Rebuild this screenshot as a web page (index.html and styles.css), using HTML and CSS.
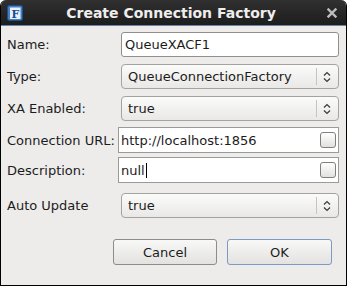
FILE: index.html
```html
<!DOCTYPE html>
<html lang="en">
<head>
  <meta charset="UTF-8">
  <title>Create Connection Factory</title>
  <link rel="stylesheet" href="styles.css">
</head>
<body>
  <div class="window">
    <div class="titlebar">
      <svg class="app-icon" width="16" height="16" viewBox="0 0 16 16">
        <rect x="0.5" y="0.5" width="15" height="15" rx="2" fill="#3f7fc6" stroke="#1d4f8f"/>
        <rect x="3" y="2.5" width="10.5" height="11.5" fill="#e9f1fa"/>
        <text x="8.3" y="12.6" text-anchor="middle" class="icon-letter">F</text>
      </svg>
      <div class="title">Create Connection Factory</div>
      <svg class="close" width="10" height="10" viewBox="0 0 10 10">
        <path d="M1.5 1.5 L8.5 8.5 M8.5 1.5 L1.5 8.5" stroke="#bdbdbd" stroke-width="2.4" stroke-linecap="square"/>
      </svg>
    </div>

    <div class="content">
      <div class="row row-name">
        <span class="label">Name:</span>
        <div class="entry">QueueXACF1</div>
      </div>
      <div class="row row-combo">
        <span class="label">Type:</span>
        <div class="combo"><span class="combo-text">QueueConnectionFactory</span><span class="combo-sep"></span><svg class="arrows" width="8" height="12" viewBox="0 0 8 12"><path d="M1 4.5 L4 1.5 L7 4.5 M1 7.5 L4 10.5 L7 7.5" fill="none" stroke="#3a3a3a" stroke-width="1.2"/></svg></div>
      </div>
      <div class="row row-combo">
        <span class="label">XA Enabled:</span>
        <div class="combo"><span class="combo-text">true</span><span class="combo-sep"></span><svg class="arrows" width="8" height="12" viewBox="0 0 8 12"><path d="M1 4.5 L4 1.5 L7 4.5 M1 7.5 L4 10.5 L7 7.5" fill="none" stroke="#3a3a3a" stroke-width="1.2"/></svg></div>
      </div>
      <div class="row row-url">
        <span class="label">Connection URL:</span>
        <div class="entry entry-check"><span class="entry-text">http://localhost:1856</span><span class="check"></span></div>
      </div>
      <div class="row row-desc">
        <span class="label">Description:</span>
        <div class="entry entry-check"><span class="entry-text">null<span class="caret"></span></span><span class="check"></span></div>
      </div>
      <div class="row row-auto">
        <span class="label">Auto Update</span>
        <div class="combo"><span class="combo-text">true</span><span class="combo-sep"></span><svg class="arrows" width="8" height="12" viewBox="0 0 8 12"><path d="M1 4.5 L4 1.5 L7 4.5 M1 7.5 L4 10.5 L7 7.5" fill="none" stroke="#3a3a3a" stroke-width="1.2"/></svg></div>
      </div>
    </div>

    <div class="buttons">
      <button class="btn">Cancel</button>
      <button class="btn btn-default">OK</button>
    </div>
  </div>
</body>
</html>
```

FILE: styles.css
```css
* {
  margin: 0;
  padding: 0;
  box-sizing: border-box;
}

body {
  background-color: #ffffff;
  font-family: 'DejaVu Sans', sans-serif;
  font-size: 13px;
  color: #1c1c1c;
}

.window {
  width: 347px;
  height: 286px;
  background-color: #edeceb;
  border: 1px solid #000;
  border-top: none;
  border-radius: 6px 6px 0 0;
  overflow: hidden;
}

.titlebar {
  display: flex;
  align-items: center;
  height: 26px;
  padding: 0 10px 0 7px;
  background: linear-gradient(#303030, #1d1d1d);
  border-bottom: 1px solid #6683a8;
  margin: 0 -1px;
}

.app-icon {
  flex: none;
}

.icon-letter {
  font-family: 'DejaVu Serif', serif;
  font-weight: bold;
  font-size: 11px;
  fill: #1b4d8e;
}

.title {
  flex: 1;
  text-align: center;
  padding-right: 8px;
  color: #eeeeec;
  font-weight: bold;
  font-size: 14px;
}

.close {
  flex: none;
}

.content {
  display: flex;
  flex-direction: column;
  padding: 6px 7px 0 6px;
}

.row {
  display: flex;
  align-items: center;
}

.label {
  width: 114px;
  flex: none;
}

.row-name { height: 25px; }
.row-combo { height: 25px; margin-top: 7px; }
.row-url { height: 26px; margin-top: 6px; }
.row-desc { height: 26px; margin-top: 4px; }
.row-auto { height: 25px; margin-top: 10px; }

.entry {
  flex: 1;
  height: 100%;
  display: flex;
  align-items: center;
  padding-left: 3px;
  background-color: #fff;
  border: 1px solid #8f8f8d;
  border-radius: 3px;
}

.entry-check {
  margin-left: -3px;
  padding-left: 2px;
  padding-right: 2px;
  border-radius: 0;
  border-color: #9a9a98;
}

.entry-text {
  flex: 1;
}

.caret {
  display: inline-block;
  width: 1px;
  height: 15px;
  margin-left: 1px;
  vertical-align: -3px;
  background-color: #000;
}

.check {
  width: 16px;
  height: 16px;
  border: 1px solid #7f7f7d;
  border-radius: 3px;
  background: linear-gradient(#ffffff, #e2e1df);
}

.combo {
  flex: 1;
  height: 100%;
  display: flex;
  align-items: center;
  padding-left: 6px;
  background: linear-gradient(#fbfbfa, #e9e8e6);
  border: 1px solid #a3a3a1;
  border-radius: 4px;
}

.combo-text {
  flex: 1;
}

.combo-sep {
  width: 1px;
  height: 17px;
  background-color: #c5c4c2;
}

.arrows {
  margin: 0 7px 0 6px;
}

.buttons {
  display: flex;
  justify-content: flex-end;
  gap: 10px;
  padding: 21px 14px 0 0;
}

.btn {
  width: 104px;
  height: 26px;
  font-family: 'DejaVu Sans', sans-serif;
  font-size: 13px;
  color: #1c1c1c;
  background: linear-gradient(#f8f8f7, #e3e2e0);
  border: 1px solid #8c8c8a;
  border-radius: 3px;
}

.btn-default {
  width: 105px;
  border-color: #7c9bc4;
}
```
